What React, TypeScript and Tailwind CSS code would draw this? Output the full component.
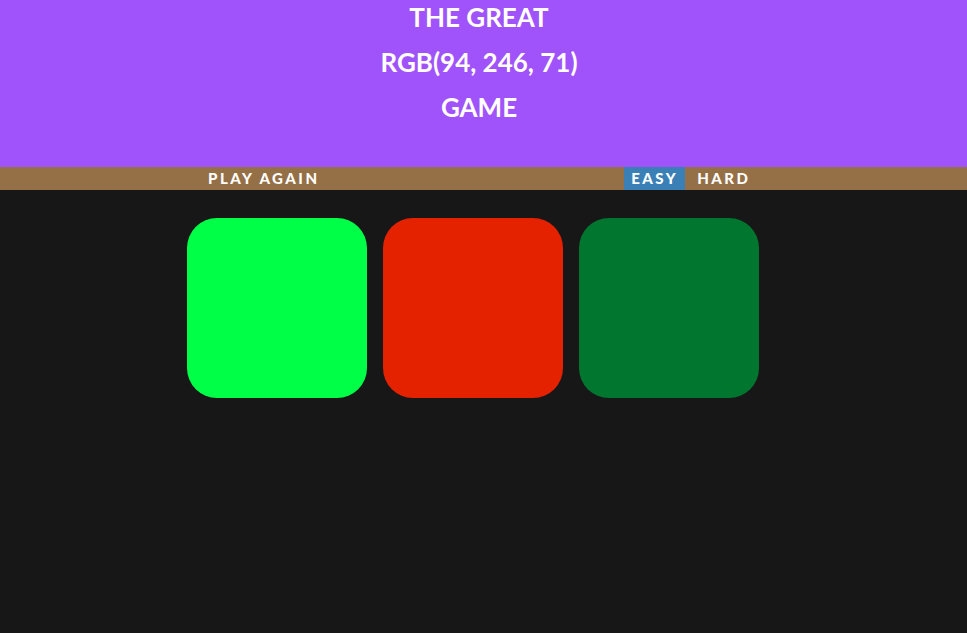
export default function App() {
  const font = { fontFamily: '"Lato", "Open Sans", "Liberation Sans", sans-serif' };
  return (
    <div className="min-h-[633px] w-full bg-[#171717]" style={font}>
      <div className="h-[167px] bg-[#a052fb] flex flex-col items-center text-white font-bold text-[26px] leading-[45px] pr-[9px]">
        <div className="-mt-[5px]">THE GREAT</div>
        <div>RGB(94, 246, 71)</div>
        <div>GAME</div>
      </div>
      <div className="h-[23px] bg-[#956f46]">
        <div className="w-[600px] mx-auto h-full flex items-stretch text-white font-black text-[15px] tracking-[2.5px]">
          <button className="ml-[17.5px] px-[7px] leading-[23px]">PLAY AGAIN</button>
          <div className="flex-1" />
          <button className="px-[7px] leading-[23px] bg-[#3a80b7]">EASY</button>
          <button className="ml-[5px] px-[7px] leading-[23px] mr-[26px]">HARD</button>
        </div>
      </div>
      <div className="w-[593px] mx-auto pt-[28px] flex gap-[16px]">
        <div className="w-[180px] h-[180px] rounded-[30px] bg-[#00ff47]" />
        <div className="w-[180px] h-[180px] rounded-[30px] bg-[#e52200]" />
        <div className="w-[180px] h-[180px] rounded-[30px] bg-[#00762e]" />
      </div>
    </div>
  );
}
